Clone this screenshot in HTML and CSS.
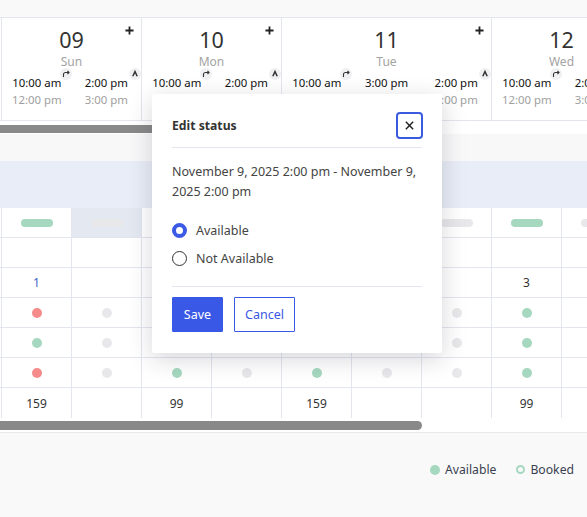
FILE: index.html
```html
<html>
  <head>
    <meta charset="UTF-8" />
    <meta name="viewport" content="width=device-width, initial-scale=1.0" />
    <link rel="stylesheet" href="styles.css">
  </head>
  <body>
    <div class="topGap"></div>

    <!-- day header -->
    <div class="calendar">
      <div class="days">
        <div class="day w1"></div>
        <div class="day w2">
          <svg class="plus" viewBox="0 0 10 10"><path d="M5 0.5V9.5M0.5 5H9.5" /></svg>
          <div class="dayNum">09</div>
          <div class="dayName">Sun</div>
          <div class="slots">
            <div class="slot">
              <span class="badge"><svg viewBox="0 0 12 12"><path class="redo" d="M3.5 9V6.5a2 2 0 0 1 2-2H9M7.5 3L9 4.5L7.5 6" /></svg></span>
              <div class="t1">10:00 am</div><div class="t2">12:00 pm</div>
            </div>
            <div class="slot">
              <span class="badge"><svg viewBox="0 0 12 12"><path class="caret" d="M3.8 8.2L6 3.6L8.2 8.2" /></svg></span>
              <div class="t1">2:00 pm</div><div class="t2">3:00 pm</div>
            </div>
          </div>
        </div>
        <div class="day w2">
          <svg class="plus" viewBox="0 0 10 10"><path d="M5 0.5V9.5M0.5 5H9.5" /></svg>
          <div class="dayNum">10</div>
          <div class="dayName">Mon</div>
          <div class="slots">
            <div class="slot">
              <span class="badge"><svg viewBox="0 0 12 12"><path class="redo" d="M3.5 9V6.5a2 2 0 0 1 2-2H9M7.5 3L9 4.5L7.5 6" /></svg></span>
              <div class="t1">10:00 am</div><div class="t2">12:00 pm</div>
            </div>
            <div class="slot">
              <span class="badge"><svg viewBox="0 0 12 12"><path class="caret" d="M3.8 8.2L6 3.6L8.2 8.2" /></svg></span>
              <div class="t1">2:00 pm</div><div class="t2">3:00 pm</div>
            </div>
          </div>
        </div>
        <div class="day w3">
          <svg class="plus" viewBox="0 0 10 10"><path d="M5 0.5V9.5M0.5 5H9.5" /></svg>
          <div class="dayNum">11</div>
          <div class="dayName">Tue</div>
          <div class="slots">
            <div class="slot">
              <span class="badge"><svg viewBox="0 0 12 12"><path class="redo" d="M3.5 9V6.5a2 2 0 0 1 2-2H9M7.5 3L9 4.5L7.5 6" /></svg></span>
              <div class="t1">10:00 am</div><div class="t2">12:00 pm</div>
            </div>
            <div class="slot">
              <div class="t1">3:00 pm</div><div class="t2">5:00 pm</div>
            </div>
            <div class="slot">
              <span class="badge"><svg viewBox="0 0 12 12"><path class="caret" d="M3.8 8.2L6 3.6L8.2 8.2" /></svg></span>
              <div class="t1">2:00 pm</div><div class="t2">3:00 pm</div>
            </div>
          </div>
        </div>
        <div class="day w2">
          <svg class="plus" viewBox="0 0 10 10"><path d="M5 0.5V9.5M0.5 5H9.5" /></svg>
          <div class="dayNum">12</div>
          <div class="dayName">Wed</div>
          <div class="slots">
            <div class="slot">
              <span class="badge"><svg viewBox="0 0 12 12"><path class="redo" d="M3.5 9V6.5a2 2 0 0 1 2-2H9M7.5 3L9 4.5L7.5 6" /></svg></span>
              <div class="t1">10:00 am</div><div class="t2">12:00 pm</div>
            </div>
            <div class="slot">
              <div class="t1">2:00 pm</div><div class="t2">3:00 pm</div>
            </div>
          </div>
        </div>
      </div>
    </div>
    <div class="track topTrack"><div class="thumb"></div></div>

    <div class="sectionGap"></div>
    <div class="band"></div>

    <!-- slot grid -->
    <div class="gridWrap">
      <div class="grid">
        <div class="row">
          <div class="cell"></div>
          <div class="cell"><span class="pill green"></span></div>
          <div class="cell hl"><span class="pill gray"></span></div>
          <div class="cell"><span class="pill gray"></span></div>
          <div class="cell"><span class="pill gray"></span></div>
          <div class="cell"><span class="pill green"></span></div>
          <div class="cell"><span class="pill gray"></span></div>
          <div class="cell"><span class="pill gray"></span></div>
          <div class="cell"><span class="pill green"></span></div>
          <div class="cell"><span class="pill gray"></span></div>
        </div>
        <div class="row">
          <div class="cell"></div><div class="cell"></div><div class="cell"></div><div class="cell"></div><div class="cell"></div>
          <div class="cell"></div><div class="cell"></div><div class="cell"></div><div class="cell"></div><div class="cell"></div>
        </div>
        <div class="row">
          <div class="cell"></div><div class="cell link">1</div><div class="cell"></div><div class="cell"></div><div class="cell"></div>
          <div class="cell"></div><div class="cell"></div><div class="cell"></div><div class="cell">3</div><div class="cell"></div>
        </div>
        <div class="row">
          <div class="cell"></div>
          <div class="cell"><span class="dot red"></span></div>
          <div class="cell"><span class="dot gray"></span></div>
          <div class="cell"><span class="dot green"></span></div>
          <div class="cell"><span class="dot gray"></span></div>
          <div class="cell"><span class="dot green"></span></div>
          <div class="cell"><span class="dot gray"></span></div>
          <div class="cell"><span class="dot gray"></span></div>
          <div class="cell"><span class="dot green"></span></div>
          <div class="cell"></div>
        </div>
        <div class="row">
          <div class="cell"></div>
          <div class="cell"><span class="dot green"></span></div>
          <div class="cell"><span class="dot gray"></span></div>
          <div class="cell"><span class="dot green"></span></div>
          <div class="cell"><span class="dot gray"></span></div>
          <div class="cell"><span class="dot green"></span></div>
          <div class="cell"><span class="dot gray"></span></div>
          <div class="cell"><span class="dot gray"></span></div>
          <div class="cell"><span class="dot green"></span></div>
          <div class="cell"></div>
        </div>
        <div class="row">
          <div class="cell"></div>
          <div class="cell"><span class="dot red"></span></div>
          <div class="cell"><span class="dot gray"></span></div>
          <div class="cell"><span class="dot green"></span></div>
          <div class="cell"><span class="dot gray"></span></div>
          <div class="cell"><span class="dot green"></span></div>
          <div class="cell"><span class="dot gray"></span></div>
          <div class="cell"><span class="dot gray"></span></div>
          <div class="cell"><span class="dot green"></span></div>
          <div class="cell"></div>
        </div>
        <div class="row">
          <div class="cell"></div><div class="cell">159</div><div class="cell"></div><div class="cell">99</div><div class="cell"></div>
          <div class="cell">159</div><div class="cell"></div><div class="cell"></div><div class="cell">99</div><div class="cell"></div>
        </div>
      </div>
    </div>
    <div class="track bottomTrack"><div class="thumb"></div></div>

    <div class="legend">
      <span class="legendItem"><span class="legendDot"></span>Available</span>
      <span class="legendItem"><span class="legendRing"></span>Booked</span>
    </div>

    <!-- popup -->
    <div class="modal">
      <div class="modalHead">
        <span class="modalTitle">Edit status</span>
        <button class="closeBtn" type="button">
          <svg viewBox="0 0 12 12"><path d="M2 2L10 10M10 2L2 10" /></svg>
        </button>
      </div>
      <p class="range">November 9, 2025 2:00 pm - November 9, 2025 2:00 pm</p>
      <div class="option first"><span class="radio checked"></span>Available</div>
      <div class="option"><span class="radio"></span>Not Available</div>
      <div class="modalFoot">
        <button class="save" type="button">Save</button>
        <button class="cancel" type="button">Cancel</button>
      </div>
    </div>
  </body>
</html>
```

FILE: styles.css
```css
body {
  margin: 0;
  background-color: #f9f9fa;
  color: #333;
  font-family: "Noto Sans", "Open Sans", sans-serif;
  font-size: 11.4px;
  overflow: hidden;
  position: relative;
}

.topGap {
  height: 17px;
}

.calendar {
  background-color: #fff;
  border-top: 1px solid #e4e6ee;
  border-bottom: 1px solid #e4e6ee;
  overflow: hidden;
}

.days {
  display: flex;
  margin-left: -68px;
}

.day {
  position: relative;
  flex: none;
  box-sizing: border-box;
  border-right: 1px solid #e4e6ee;
  padding: 8px 0 12px;
  text-align: center;
}
.w1 { width: 70px; }
.w2 { width: 140px; }
.w3 { width: 210px; }

.plus {
  position: absolute;
  top: 8px;
  right: 7px;
  width: 9px;
  height: 9px;
}
.plus path {
  stroke: #222;
  stroke-width: 2;
  fill: none;
}

.dayNum {
  font-size: 21.5px;
  line-height: 28px;
  color: #333;
}

.dayName {
  font-size: 12px;
  line-height: 15px;
  color: #a3a3a3;
}

.slots {
  display: flex;
  margin-top: 5px;
}

.slot {
  position: relative;
  width: 70px;
  line-height: 17px;
  white-space: nowrap;
}
.t1 {
  color: #111;
}
.t2 {
  color: #a0a0a0;
}

.badge {
  position: absolute;
  top: -6px;
  right: 0;
  width: 12px;
  height: 12px;
  border-radius: 50%;
  background-color: #f0f0f2;
}
.badge svg {
  display: block;
  width: 12px;
  height: 12px;
}
.badge path {
  fill: none;
  stroke: #333;
  stroke-width: 1.1;
}
.badge .caret {
  stroke-width: 1.5;
}

.track {
  background-color: #fff;
  overflow: hidden;
}
.thumb {
  background-color: #898989;
}
.topTrack {
  height: 13px;
}
.topTrack .thumb {
  margin-top: 4px;
  width: 300px;
  height: 8px;
}

.sectionGap {
  height: 27px;
  background-color: #f8f8f9;
}

.band {
  height: 47px;
  background-color: #e9edf7;
}

.gridWrap {
  background-color: #fff;
  overflow: hidden;
}

.grid {
  width: 700px;
  margin-left: -68px;
}
.row {
  display: grid;
  grid-template-columns: repeat(10, 70px);
}
.cell {
  box-sizing: border-box;
  height: 30px;
  border-right: 1px solid #e3e6ef;
  border-bottom: 1px solid #e3e6ef;
  display: flex;
  align-items: center;
  justify-content: center;
  font-size: 12px;
  color: #333;
}
.row:last-child .cell {
  border-bottom: none;
}
.hl {
  background-color: #e4e8f1;
}
.link {
  color: #3a66c9;
}

.pill {
  width: 32px;
  height: 8px;
  border-radius: 4px;
}
.dot {
  width: 10px;
  height: 10px;
  border-radius: 50%;
}
.green { background-color: #a6d8c0; }
.gray { background-color: #e8e8eb; }
.red { background-color: #f68b8b; }

.bottomTrack {
  height: 14px;
  border-bottom: 1px solid #e9e9ee;
}
.bottomTrack .thumb {
  margin-top: 3px;
  width: 422px;
  height: 9px;
  border-radius: 0 5px 5px 0;
}

.legend {
  display: flex;
  justify-content: flex-end;
  gap: 20px;
  padding: 28px 13px 0 0;
  font-size: 12.2px;
  color: #3a3f4f;
}
.legendItem {
  display: flex;
  align-items: center;
  gap: 5px;
}
.legendDot {
  width: 10px;
  height: 10px;
  border-radius: 50%;
  background-color: #a6d8c0;
}
.legendRing {
  box-sizing: border-box;
  width: 9px;
  height: 9px;
  border-radius: 50%;
  border: 2px solid #a6d8c0;
}

/* popup sits over the grid */
.modal {
  position: absolute;
  left: 152px;
  top: 94px;
  width: 290px;
  box-sizing: border-box;
  padding: 18px 20px 21px;
  background-color: #fff;
  border-radius: 2px;
  box-shadow: 0 6px 24px rgba(30, 30, 50, 0.18);
  font-size: 12.5px;
  color: #444;
}

.modalHead {
  display: flex;
  justify-content: space-between;
  align-items: center;
  padding-bottom: 8px;
  border-bottom: 1px solid #e3e5ef;
}
.modalTitle {
  font-weight: bold;
  font-size: 12.2px;
  color: #333;
}
.closeBtn {
  box-sizing: border-box;
  width: 27px;
  height: 27px;
  margin-right: -1px;
  padding: 0;
  border: 2px solid #3b5bdf;
  border-radius: 4px;
  background-color: #fff;
  display: flex;
  align-items: center;
  justify-content: center;
}
.closeBtn svg {
  width: 11px;
  height: 11px;
}
.closeBtn path {
  stroke: #222;
  stroke-width: 1.6;
  fill: none;
}

.range {
  margin: 14px 0 14px;
  line-height: 20px;
}

.option {
  display: flex;
  align-items: center;
  gap: 9px;
  height: 28px;
  color: #444;
}
.radio {
  box-sizing: border-box;
  width: 15px;
  height: 15px;
  border-radius: 50%;
  border: 1.5px solid #333;
}
.radio.checked {
  border: 4px solid #3b5be6;
}

.modalFoot {
  display: flex;
  gap: 11px;
  margin-top: 14px;
  padding-top: 10px;
  border-top: 1px solid #e3e5ef;
}
.save,
.cancel {
  height: 35px;
  font-family: inherit;
  font-size: 12.5px;
  border-radius: 1px;
  border: 1px solid #3a58e6;
}
.save {
  width: 51px;
  background-color: #3a58e6;
  color: #fff;
}
.cancel {
  width: 61px;
  background-color: #fff;
  color: #3a58e6;
}
```
